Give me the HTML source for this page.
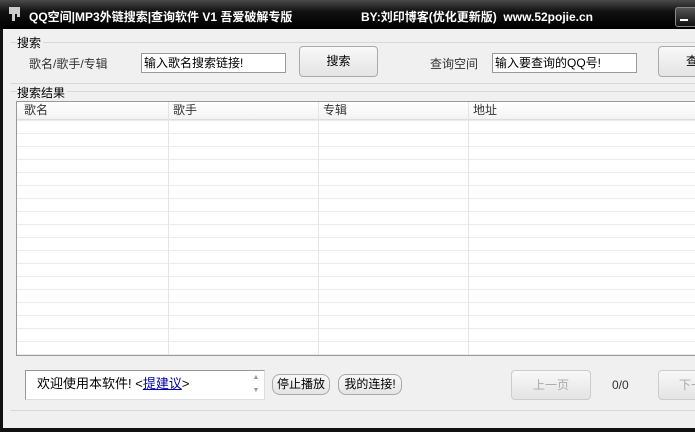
<!DOCTYPE html><html><head><meta charset="utf-8"><style>
body{margin:0;width:695px;height:432px;overflow:hidden;background:#f0f0f0;font-family:"Liberation Sans","Noto Sans CJK SC",sans-serif;font-size:12px;color:#000;position:relative}
.a{position:absolute;white-space:nowrap}
.title{left:0;top:0;width:695px;height:29px;background:linear-gradient(#4a4a4a,#111 40%,#000);color:#fff;font-weight:bold;font-size:12px}
.inp{background:#fff;border:1px solid #999;box-sizing:border-box;height:20px;line-height:18px;padding-left:2px}
.btn{border:1px solid #aaa;border-radius:4px;background:linear-gradient(#f8f8f8,#e4e4e4);box-sizing:border-box;text-align:center}
.grp{border-top:1px solid #d8d8d8;height:0}
</style></head><body>
<div class="a" style="left:0;top:0;width:3px;height:432px;background:#111"></div>
<div class="a" style="left:0;top:428px;width:695px;height:4px;background:#111"></div>
<div class="a title">
<div class="a" style="left:9px;top:7px;width:11px;height:7px;background:#ccc"></div>
<div class="a" style="left:12px;top:14px;width:3px;height:7px;background:#ccc"></div>
<div class="a" style="left:17px;top:14px;width:3px;height:3px;background:#ccc"></div>
<span class="a" style="left:29px;top:8px">QQ空间|MP3外链搜索|查询软件 V1 吾爱破解专版</span><span class="a" style="left:361px;top:8px">BY:刘印博客(优化更新版)&nbsp; www.52pojie.cn</span>
<div class="a" style="left:675px;top:7px;width:22px;height:18px;border:1px solid #888;border-radius:3px;background:linear-gradient(#555,#111)"></div>
<div class="a" style="left:680px;top:19px;width:8px;height:2px;background:#fff"></div></div>
<div class="a grp" style="left:10px;top:42px;width:685px"></div>
<div class="a" style="left:17px;top:34px;background:#f0f0f0;padding-right:2px">搜索</div>
<div class="a" style="left:29px;top:55px;color:#333">歌名/歌手/专辑</div>
<div class="a inp" style="left:141px;top:53px;width:145px">输入歌名搜索链接!</div>
<div class="a btn" style="left:299px;top:46px;width:79px;height:31px;line-height:29px">搜索</div>
<div class="a" style="left:430px;top:55px;color:#333">查询空间</div>
<div class="a inp" style="left:492px;top:53px;width:145px">输入要查询的QQ号!</div>
<div class="a btn" style="left:658px;top:46px;width:50px;height:31px;line-height:29px;text-align:left;padding-left:27px">查</div>
<div class="a grp" style="left:10px;top:83px;width:685px"></div>
<div class="a grp" style="left:10px;top:91px;width:685px"></div>
<div class="a" style="left:17px;top:84px;background:#f0f0f0;padding-right:2px">搜索结果</div>
<div class="a" style="left:16px;top:101px;width:680px;height:255px;border:1px solid #999;box-sizing:border-box;background:#fff repeating-linear-gradient(#fff 0 12px,#ececec 12px 13px);background-position:0 6px"></div>
<div class="a" style="left:17px;top:102px;width:678px;height:17px;background:linear-gradient(#fff,#f3f3f3);border-bottom:1px solid #ddd;color:#333;line-height:17px">
<span class="a" style="left:7px">歌名</span><span class="a" style="left:156px">歌手</span><span class="a" style="left:306px">专辑</span><span class="a" style="left:456px">地址</span></div>
<div class="a" style="left:168px;top:102px;width:1px;height:253px;background:#e4e4e4"></div>
<div class="a" style="left:318px;top:102px;width:1px;height:253px;background:#e4e4e4"></div>
<div class="a" style="left:468px;top:102px;width:1px;height:253px;background:#e4e4e4"></div>
<div class="a" style="left:25px;top:370px;width:240px;height:30px;background:#fff;border:1px solid #999;border-right-color:#ddd;border-bottom-color:#ddd;box-sizing:border-box;font-size:13px;line-height:26px;padding-left:11px">欢迎使用本软件! &lt;<span style="color:#00a;text-decoration:underline">提建议</span>&gt;</div>
<div class="a" style="left:248px;top:371px;width:16px;height:28px;color:#999;font-size:7px;line-height:13px;text-align:center">▲<br>▼</div>
<div class="a btn" style="left:272px;top:374px;width:58px;height:21px;line-height:19px;border-radius:8px">停止播放</div>
<div class="a btn" style="left:338px;top:374px;width:64px;height:21px;line-height:19px;border-radius:8px">我的连接!</div>
<div class="a btn" style="left:511px;top:370px;width:80px;height:30px;line-height:28px;color:#aaa;border-color:#ccc">上一页</div>
<div class="a" style="left:612px;top:378px;color:#333">0/0</div>
<div class="a btn" style="left:658px;top:370px;width:50px;height:30px;line-height:28px;color:#aaa;border-color:#ccc;text-align:left;padding-left:20px">下一</div>
<div class="a grp" style="left:10px;top:410px;width:685px"></div>
</body></html>
